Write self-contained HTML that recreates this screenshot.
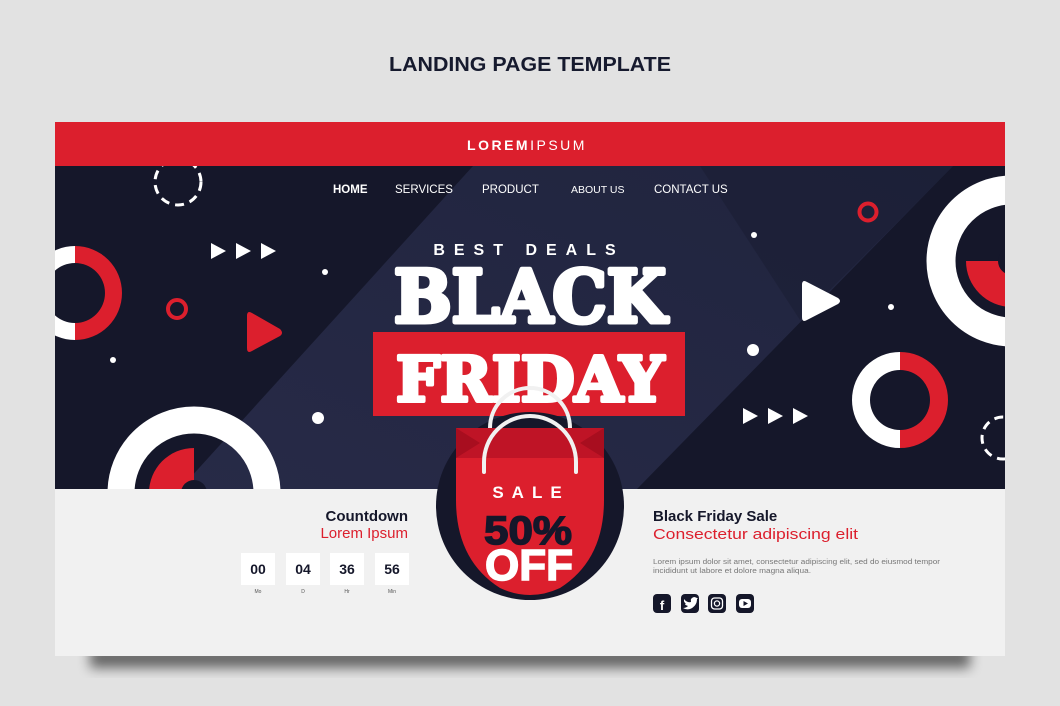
<!DOCTYPE html>
<html><head><meta charset="utf-8"><style>
html,body{margin:0;padding:0;background:#e2e2e2;width:1060px;height:706px;overflow:hidden}
svg{display:block}
text{font-family:"Liberation Sans",sans-serif}
</style></head><body>
<svg width="1060" height="706" viewBox="0 0 1060 706" xmlns="http://www.w3.org/2000/svg">
<defs>
<filter id="sh" x="-10%" y="-50%" width="120%" height="200%"><feGaussianBlur stdDeviation="6"/></filter>
<clipPath id="hero"><rect x="55" y="166" width="950" height="323"/></clipPath>
<linearGradient id="band" x1="0" y1="1" x2="1" y2="0"><stop offset="0" stop-color="#272a47"/><stop offset="1" stop-color="#20243e"/></linearGradient>
</defs>
<rect width="1060" height="706" fill="#e2e2e2"/>
<text x="530" y="71" text-anchor="middle" font-size="20" font-weight="700" fill="#161a2e" textLength="282" lengthAdjust="spacingAndGlyphs">LANDING PAGE TEMPLATE</text>
<rect x="90" y="648" width="880" height="20" fill="#000" opacity="0.55" filter="url(#sh)"/>
<rect x="55" y="489" width="950" height="167" fill="#f1f1f1"/>
<rect x="55" y="122" width="950" height="44" fill="#dc1f2d"/>
<text x="527" y="150" text-anchor="middle" font-size="14" fill="#fff" letter-spacing="2.5"><tspan font-weight="700">LOREM</tspan>IPSUM</text>
<g clip-path="url(#hero)">
<rect x="55" y="166" width="950" height="323" fill="#15172a"/>
<polygon points="473,166 953,166 637,489 180,489" fill="url(#band)"/>
<polygon points="700,166 953,166 800,320" fill="#1b1e34" opacity="0.6"/>
<circle cx="178" cy="182" r="23" fill="none" stroke="#fff" stroke-width="3" stroke-dasharray="9 6"/>
<circle cx="1003" cy="438" r="21" fill="none" stroke="#fff" stroke-width="3" stroke-dasharray="9 6"/>
<path d="M75,246 A47,47 0 0 1 75,340 L75,323 A30,30 0 0 0 75,263 Z" fill="#dc1f2d"/>
<path d="M75,246 A47,47 0 0 0 75,340 L75,323 A30,30 0 0 1 75,263 Z" fill="#fff"/>
<circle cx="177" cy="309" r="9" fill="none" stroke="#dc1f2d" stroke-width="4"/>
<path d="M247,316 Q247,310 252,313 L280,329 Q284,333 280,336 L252,351 Q247,354 247,348 Z" fill="#dc1f2d"/>
<g fill="#fff">
<path d="M211,243 L226,251 L211,259 Z"/><path d="M236,243 L251,251 L236,259 Z"/><path d="M261,243 L276,251 L261,259 Z"/>
<path d="M743,408 L758,416 L743,424 Z"/><path d="M768,408 L783,416 L768,424 Z"/><path d="M793,408 L808,416 L793,424 Z"/>
<path d="M802,285 Q802,279 807,282 L838,298 Q842,301 838,304 L807,320 Q802,323 802,317 Z"/>
<circle cx="325" cy="272" r="3"/><circle cx="113" cy="360" r="3"/><circle cx="318" cy="418" r="6"/>
<circle cx="754" cy="235" r="3"/><circle cx="753" cy="350" r="6"/><circle cx="891" cy="307" r="3"/>
</g>
<circle cx="194" cy="493" r="73" fill="none" stroke="#fff" stroke-width="27"/>
<path d="M194,448 A45,45 0 0 0 149,493 L194,493 Z" fill="#dc1f2d"/>
<circle cx="194" cy="493" r="13" fill="#15172a"/>
<circle cx="1012" cy="261" r="71" fill="none" stroke="#fff" stroke-width="29"/>
<path d="M966,261 A46,46 0 0 0 1012,307 L1012,261 Z" fill="#dc1f2d"/>
<circle cx="1012" cy="261" r="14" fill="#15172a"/>
<circle cx="868" cy="212" r="8.5" fill="none" stroke="#dc1f2d" stroke-width="4"/>
<path d="M900,352 A48,48 0 0 1 900,448 L900,430 A30,30 0 0 0 900,370 Z" fill="#dc1f2d"/>
<path d="M900,352 A48,48 0 0 0 900,448 L900,430 A30,30 0 0 1 900,370 Z" fill="#fff"/>
</g>
<g font-size="11.5" fill="#fff">
<text x="333" y="193" font-weight="700">HOME</text>
<text x="395" y="193">SERVICES</text>
<text x="482" y="193">PRODUCT</text>
<text x="571" y="193" font-size="10.5">ABOUT US</text>
<text x="654" y="193">CONTACT US</text>
</g>
<text x="529" y="255" text-anchor="middle" font-size="16" font-weight="700" fill="#fff" letter-spacing="9">BEST DEALS</text>
<text x="530" y="322" text-anchor="middle" font-size="72" font-weight="700" fill="#fff" stroke="#fff" stroke-width="5" stroke-linejoin="round" textLength="272" lengthAdjust="spacingAndGlyphs" style="font-family:'DejaVu Serif','Liberation Serif',serif">BLACK</text>
<rect x="373" y="332" width="312" height="84" fill="#dc1f2d"/>
<text x="530" y="401" text-anchor="middle" font-size="62" font-weight="700" fill="#fff" stroke="#fff" stroke-width="4" stroke-linejoin="round" textLength="268" lengthAdjust="spacingAndGlyphs" style="font-family:'DejaVu Serif','Liberation Serif',serif">FRIDAY</text>
<circle cx="530" cy="506" r="94" fill="#15172a"/>
<path d="M490,428 A40,40 0 0 1 570,428" fill="none" stroke="#f1f1f1" stroke-width="4"/>
<path d="M456,428 L604,428 L604,500 Q604,560 560,588 Q530,602 500,588 Q456,560 456,500 Z" fill="#dc1f2d"/>
<path d="M456,428 L604,428 L604,458 L456,458 Z" fill="#bf1426"/>
<path d="M456,428 L480,443 L456,458 Z M604,428 L580,443 L604,458 Z" fill="#a80e1f"/>
<path d="M484,472 L484,462 A46,46 0 0 1 576,462 L576,472" fill="none" stroke="#f1f1f1" stroke-width="4" stroke-linecap="round"/>
<text x="531" y="498" text-anchor="middle" font-size="17" font-weight="700" fill="#fff" letter-spacing="8">SALE</text>
<text x="528" y="544" text-anchor="middle" font-size="40" font-weight="700" fill="#15172a" stroke="#15172a" stroke-width="1.5" textLength="88" lengthAdjust="spacingAndGlyphs">50%</text>
<text x="529" y="580" text-anchor="middle" font-size="44" font-weight="700" fill="#fff" stroke="#fff" stroke-width="1.5" textLength="88" lengthAdjust="spacingAndGlyphs">OFF</text>
<text x="408" y="521" text-anchor="end" font-size="15" font-weight="700" fill="#15172a">Countdown</text>
<text x="408" y="538" text-anchor="end" font-size="15" fill="#dc1f2d">Lorem Ipsum</text>
<g font-size="14" font-weight="700" fill="#15172a" text-anchor="middle">
<rect x="241" y="553" width="34" height="32" fill="#fff"/><text x="258" y="574">00</text>
<rect x="286" y="553" width="34" height="32" fill="#fff"/><text x="303" y="574">04</text>
<rect x="330" y="553" width="34" height="32" fill="#fff"/><text x="347" y="574">36</text>
<rect x="375" y="553" width="34" height="32" fill="#fff"/><text x="392" y="574">56</text>
</g>
<g font-size="5" fill="#555" text-anchor="middle">
<text x="258" y="593">Mo</text><text x="303" y="593">D</text><text x="347" y="593">Hr</text><text x="392" y="593">Min</text>
</g>
<text x="653" y="521" font-size="15" font-weight="700" fill="#15172a">Black Friday Sale</text>
<text x="653" y="539" font-size="15" fill="#dc1f2d" textLength="205" lengthAdjust="spacingAndGlyphs">Consectetur adipiscing elit</text>
<text x="653" y="564" font-size="7" fill="#777" textLength="287" lengthAdjust="spacingAndGlyphs">Lorem ipsum dolor sit amet, consectetur adipiscing elit, sed do eiusmod tempor</text>
<text x="653" y="573" font-size="7" fill="#777" textLength="158" lengthAdjust="spacingAndGlyphs">incididunt ut labore et dolore magna aliqua.</text>
<g fill="#15172a">
<rect x="653" y="594" width="18" height="19" rx="4"/>
<rect x="681" y="594" width="18" height="19" rx="4"/>
<rect x="708" y="594" width="18" height="19" rx="4"/>
<rect x="736" y="594" width="18" height="19" rx="4"/>
</g>
<text x="662" y="610" text-anchor="middle" font-size="13" font-weight="700" fill="#fff">f</text>
<path d="M684,599 Q687,603 691,602 Q690,598 694,597 Q695,597 697,598 L698,598 L697,599 Q697,606 690,609 Q686,610 683,608 Q686,608 688,606 Q685,605 685,604 Q686,604 686,604 Q684,602 684,601Z" fill="#fff"/>
<rect x="711.5" y="598" width="11" height="11" rx="3" fill="none" stroke="#fff" stroke-width="1.3"/>
<circle cx="717" cy="603.5" r="2.6" fill="none" stroke="#fff" stroke-width="1.3"/>
<rect x="739" y="599" width="12" height="9" rx="3" fill="#fff"/>
<path d="M743.5,601 L748,603.5 L743.5,606 Z" fill="#15172a"/>
</svg>
</body></html>
